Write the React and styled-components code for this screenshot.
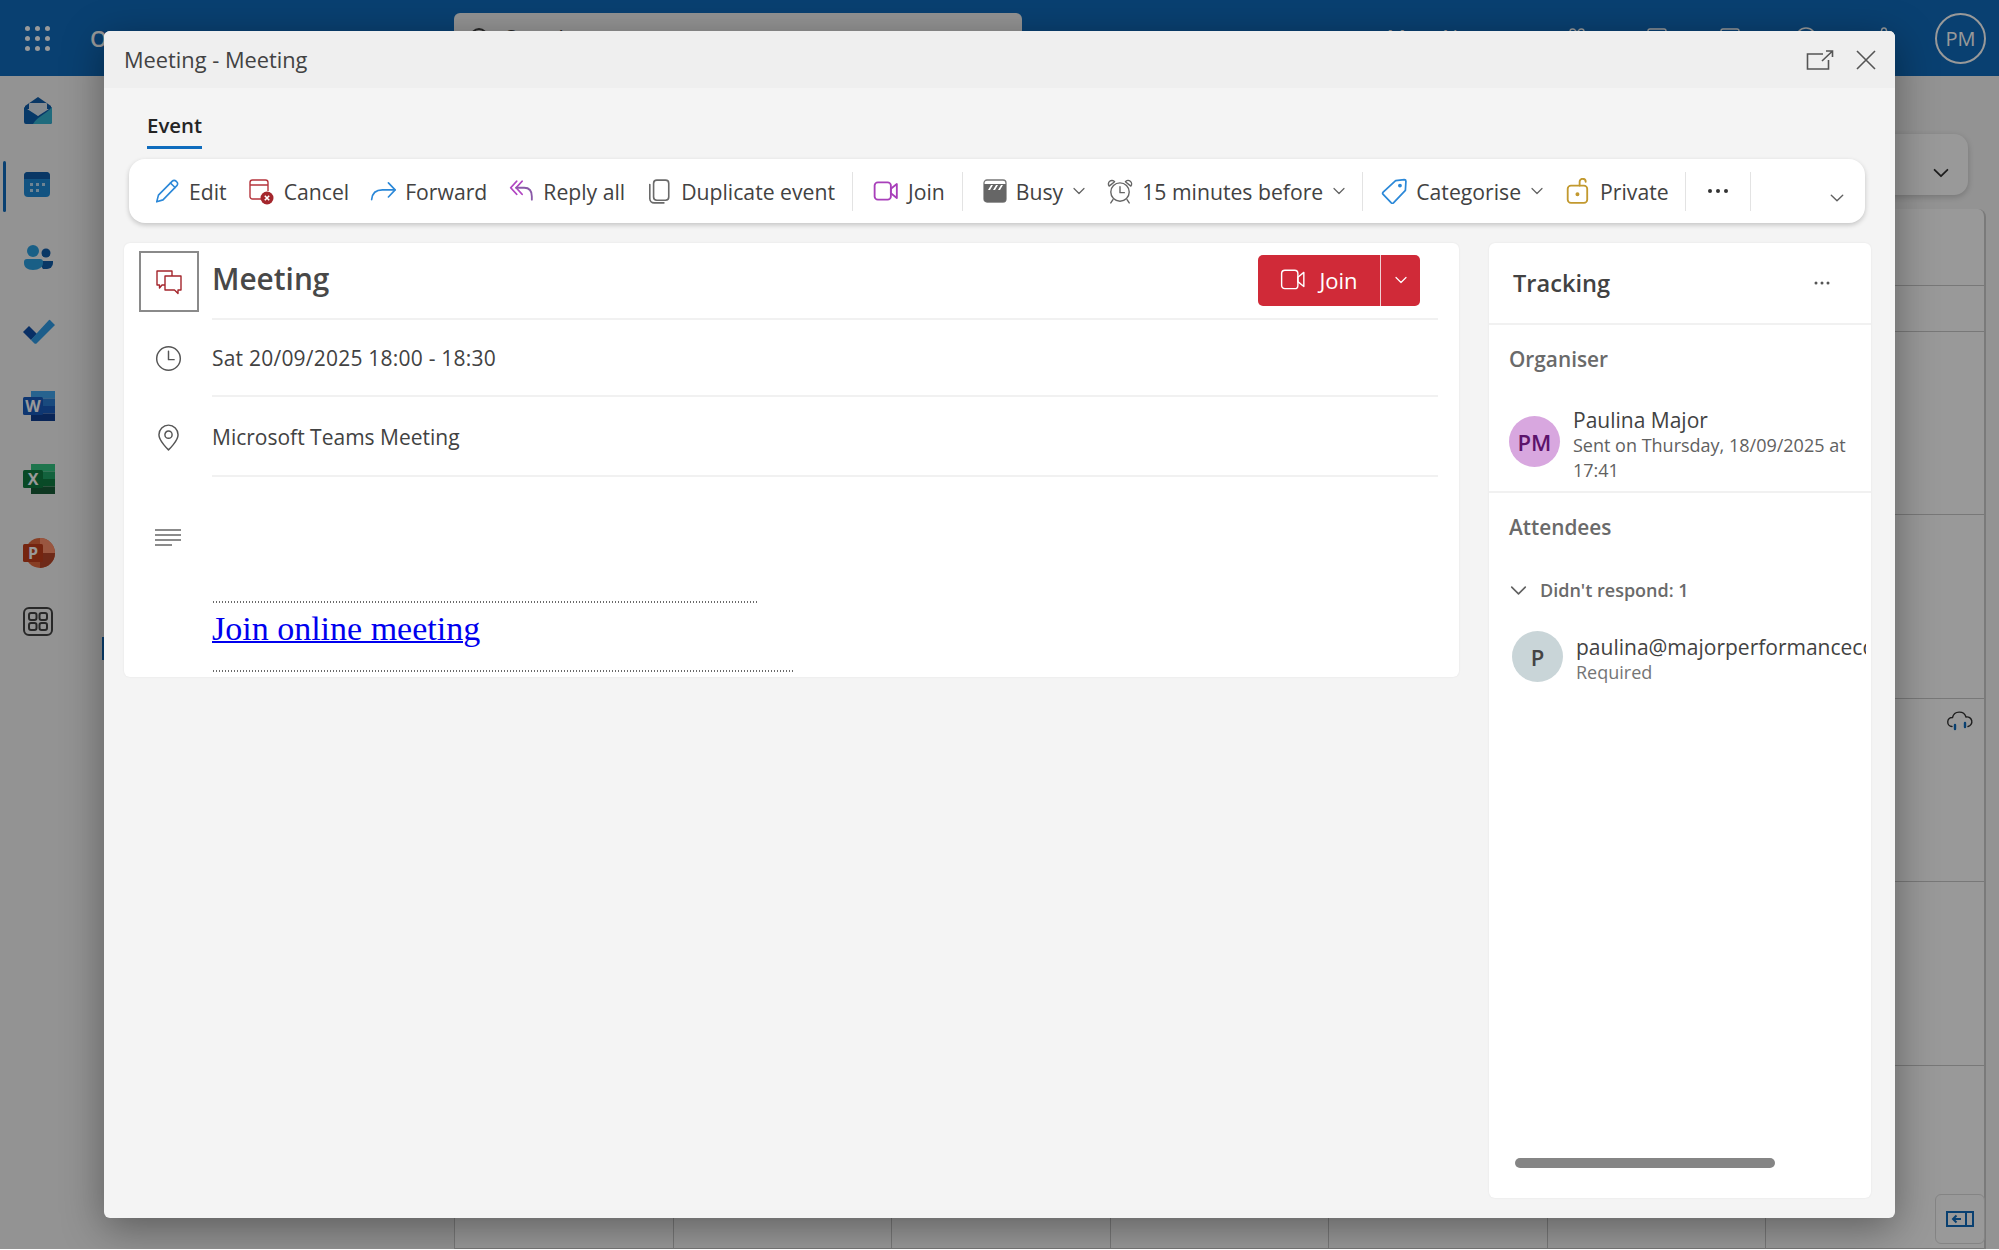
import React from 'react';
import styled, {createGlobalStyle} from 'styled-components';
import {Gift, Square, HelpCircle, Settings, Search, Video} from 'lucide-react';

const Global = createGlobalStyle`
    html, body {
        margin: 0;
        padding: 0;
        background: #fff;
        overflow: hidden;
    }
    * {
        box-sizing: border-box;
    }
    body {
        font-family: "Open Sans", "Noto Sans", sans-serif;
    }
`;

const Page = styled.div`
    position: relative;
    width: 1999px;
    height: 1249px;
    overflow: hidden;
    background: #f5f5f5;
`;

/* outlook behind the dialog */
const TopBar = styled.header`
    height: 76px;
    background: #0f6cbd;
    display: flex;
    align-items: center;
    color: #fff;
`;

const LeftSlot = styled.div`
    width: 454px;
    padding-left: 25px;
    display: flex;
    align-items: center;
    gap: 40px;
`;

const Waffle = styled.div`
    display: grid;
    grid-template-columns: repeat(3, 5px);
    gap: 5px;
`;

const Dot = styled.span`
    width: 5px;
    height: 5px;
    border-radius: 50%;
    background: #fff;
`;

const Brand = styled.span`
    font-size: 22px;
    font-weight: 600;
`;

const SearchBox = styled.div`
    width: 568px;
    height: 50px;
    border-radius: 6px;
    background: #f5f5f5;
    color: #444;
    display: flex;
    align-items: center;
    gap: 13px;
    padding-left: 14px;
    font-size: 21px;
`;

const HeaderTools = styled.div`
    flex: 1;
    display: flex;
    align-items: center;
    justify-content: flex-end;
    padding-right: 13px;
`;

const MeetNow = styled.div`
    display: flex;
    align-items: center;
    gap: 8px;
    font-size: 21px;
    margin-right: 78px;
`;

const HeaderIcon = styled.span`
    display: flex;
    margin-right: ${p => p.$gap}px;
`;

const Me = styled.div`
    width: 51px;
    height: 51px;
    border-radius: 50%;
    border: 2px solid #fff;
    display: flex;
    align-items: center;
    justify-content: center;
    font-size: 20px;
`;

const Under = styled.div`
    display: flex;
    height: 1173px;
`;

const Rail = styled.nav`
    width: 100px;
    margin-top: -2px;
    display: flex;
    flex-direction: column;
`;

const RailItem = styled.div`
    position: relative;
    height: 73.7px;
    padding-left: 23px;
    margin-top: ${p => p.$shift || 0}px;
    display: flex;
    align-items: center;
    ${p => p.$active && `
        &::before {
            content: "";
            position: absolute;
            left: 3px;
            top: 13px;
            width: 3px;
            height: 51px;
            border-radius: 2px;
            background: #0f6cbd;
        }
    `}
`;

const Folders = styled.div`
    position: relative;
    width: 354px;
    &::before {
        content: "";
        position: absolute;
        left: 2px;
        top: 561px;
        width: 2px;
        height: 23px;
        background: #0f6cbd;
    }
`;

const CalendarArea = styled.main`
    flex: 1;
    padding: 58px 13px 0 0;
    display: flex;
    flex-direction: column;
`;

const ViewBar = styled.div`
    height: 63px;
    margin-right: 18px;
    border-radius: 14px;
    background: #fff;
    box-shadow: 0 2px 6px rgba(0, 0, 0, 0.2);
    display: flex;
    align-items: flex-end;
    justify-content: flex-end;
    padding: 0 18px 13px 0;
`;

const CalendarGrid = styled.div`
    margin-top: 14px;
    flex: 1;
    border-radius: 8px 8px 0 0;
    background: #fff;
    border-right: 2px solid #ccc;
    display: grid;
    grid-template-columns: repeat(7, 1fr);
    grid-template-rows: 77px 46px repeat(5, 183.5px);
`;

const Cell = styled.div`
    border-left: 1px solid #c8c8c8;
    border-bottom: 1px solid #c8c8c8;
    display: flex;
    justify-content: flex-end;
`;

const CloudSlot = styled.div`
    margin: 12px 10px 0 0;
`;

const ParkButton = styled.div`
    position: absolute;
    right: 14px;
    bottom: 5px;
    width: 50px;
    height: 50px;
    border: 1px solid #ddd;
    border-radius: 6px;
    background: #fff;
    display: flex;
    align-items: center;
    justify-content: center;
`;

/* dialog */
const Scrim = styled.div`
    position: absolute;
    inset: 0;
    background: rgba(0, 0, 0, 0.4);
    display: flex;
    align-items: center;
    justify-content: center;
`;

const Dialog = styled.div`
    width: 1791px;
    height: 1187px;
    border-radius: 6px;
    background: #f4f4f4;
    box-shadow: 0 10px 42px rgba(0, 0, 0, 0.38);
    display: flex;
    flex-direction: column;
    overflow: hidden;
`;

const TitleBar = styled.div`
    height: 57px;
    flex: none;
    background: #efefef;
    display: flex;
    align-items: center;
    justify-content: space-between;
    padding: 0 19px 0 20px;
    color: #424242;
    font-size: 21.8px;
`;

const WindowButtons = styled.div`
    display: flex;
    align-items: center;
    gap: 22px;
    color: #555;
`;

const Tabs = styled.div`
    height: 71px;
    flex: none;
    padding: 22px 0 0 43px;
`;

const Tab = styled.div`
    display: inline-block;
    height: 39px;
    font-size: 20.4px;
    font-weight: 600;
    line-height: 30px;
    color: #242424;
    border-bottom: 3px solid #0f6cbd;
`;

const Toolbar = styled.div`
    height: 64px;
    flex: none;
    margin: 0 30px 0 25px;
    padding: 0 20px 0 25px;
    border-radius: 16px;
    background: #fff;
    box-shadow: 0 2px 5px rgba(0, 0, 0, 0.2);
    display: flex;
    align-items: center;
    gap: 21px;
    white-space: nowrap;
`;

const ToolItem = styled.div`
    display: flex;
    align-items: center;
    gap: 9px;
    font-size: 21.2px;
    color: #424242;
`;

const ToolSep = styled.span`
    width: 1px;
    height: 39px;
    margin: 0 ${p => p.$after ?? -1}px 0 ${p => p.$before ?? -4}px;
    background: #e3e3e3;
`;

const ToolDots = styled.div`
    display: flex;
    margin: 0 4px 0 1px;
`;

const ToolEnd = styled.div`
    margin-left: auto;
    padding-top: 13px;
    display: flex;
`;

const Columns = styled.div`
    flex: 1;
    margin: 20px 24px 20px 20px;
    display: flex;
    gap: 30px;
    min-height: 0;
`;

const EventCard = styled.section`
    flex: 1;
    height: 434px;
    border-radius: 6px;
    background: #fff;
    padding-right: 21px;
    box-shadow: 0 0 2px rgba(0, 0, 0, 0.08);
`;

const HeadRow = styled.div`
    display: flex;
    height: 77px;
    padding-left: 15px;
`;

const TypeBox = styled.div`
    width: 60px;
    height: 61px;
    margin: 8px 13px 0 0;
    border: 2px solid #8a8a8a;
    display: flex;
    align-items: center;
    justify-content: center;
`;

const HeadMain = styled.div`
    flex: 1;
    display: flex;
    align-items: center;
    justify-content: space-between;
    padding-right: 18px;
    border-bottom: 2px solid #f1f1f1;
`;

const EventTitle = styled.h1`
    margin: -5px 0 0;
    font-size: 29.8px;
    font-weight: 600;
    color: #484848;
`;

const JoinSplit = styled.div`
    width: 162px;
    height: 51px;
    border-radius: 5px;
    background: #d02a38;
    color: #fff;
    display: flex;
    margin-top: -1px;
    font-size: 22px;
    font-weight: 500;
`;

const JoinMain = styled.div`
    width: 123px;
    display: flex;
    align-items: center;
    justify-content: center;
    gap: 13px;
    border-right: 1px solid #f0d0d3;
`;

const JoinDrop = styled.div`
    flex: 1;
    display: flex;
    align-items: center;
    justify-content: center;
`;

const InfoRow = styled.div`
    display: flex;
    height: ${p => p.$h}px;
`;

const InfoIcon = styled.div`
    width: 88px;
    flex: none;
    display: flex;
    justify-content: center;
    align-items: ${p => p.$top ? 'flex-start' : 'center'};
    padding: ${p => p.$top ? '52px 0 0' : '0'};
    color: #555;
`;

const InfoText = styled.div`
    flex: 1;
    display: flex;
    align-items: center;
    padding-top: 1px;
    font-size: 21px;
    letter-spacing: ${p => p.$track || 0}px;
    color: #424242;
    border-bottom: 2px solid #f1f1f1;
`;

const InviteBody = styled.div`
    flex: 1;
    padding: 124px 0 0 1px;
`;

const DottedLine = styled.div`
    width: ${p => p.$w}px;
    height: 2px;
    background: repeating-linear-gradient(90deg, #6a6a6a 0 1.5px, transparent 1.5px 3px);
`;

const MeetingLink = styled.a`
    display: block;
    height: 67px;
    padding-top: 3px;
    margin-left: -1px;
    font-family: "Liberation Serif", serif;
    font-size: 34px;
    line-height: 46px;
    color: #0000ee;
    text-decoration: underline;
    text-decoration-thickness: 2px;
`;

const Tracking = styled.aside`
    position: relative;
    width: 382px;
    flex: none;
    border-radius: 6px;
    background: #fff;
    box-shadow: 0 0 2px rgba(0, 0, 0, 0.08);
`;

const TrackHead = styled.div`
    height: 82px;
    padding: 0 41px 0 24px;
    display: flex;
    align-items: center;
    justify-content: space-between;
    border-bottom: 2px solid #f1f1f1;
`;

const TrackTitle = styled.h2`
    margin: 0;
    font-size: 23.6px;
    font-weight: 600;
    color: #424242;
`;

const Section = styled.div`
    padding: 21px 0 0 20px;
    height: ${p => p.$h}px;
    border-bottom: ${p => p.$line ? '2px solid #f1f1f1' : 'none'};
`;

const SectionLabel = styled.div`
    height: 26px;
    line-height: 26px;
    font-size: 20.8px;
    font-weight: 600;
    color: #6a6a6a;
`;

const Person = styled.div`
    display: flex;
    align-items: flex-start;
    gap: ${p => p.$gap}px;
    margin: ${p => p.$m};
    overflow: hidden;
    white-space: nowrap;
`;

const Avatar = styled.div`
    width: 51px;
    height: 51px;
    flex: none;
    margin-top: ${p => p.$top}px;
    border-radius: 50%;
    background: ${p => p.$bg};
    color: ${p => p.$fg};
    display: flex;
    align-items: center;
    justify-content: center;
    font-size: 22px;
    font-weight: 600;
`;

const PersonText = styled.div`
    margin-top: ${p => p.$top}px;
`;

const PersonName = styled.div`
    font-size: 21px;
    line-height: 26px;
    color: #424242;
`;

const PersonNote = styled.div`
    font-size: 18px;
    line-height: 25px;
    color: ${p => p.$light ? '#757575' : '#616161'};
    white-space: ${p => p.$wrap ? 'normal' : 'nowrap'};
    width: 285px;
`;

const Group = styled.div`
    display: flex;
    align-items: center;
    gap: 12px;
    margin-top: 38px;
    font-size: 18px;
    font-weight: 600;
    color: #6a6a6a;
    line-height: 24px;
`;

const ScrollThumb = styled.div`
    position: absolute;
    left: 26px;
    bottom: 30px;
    width: 260px;
    height: 10px;
    border-radius: 5px;
    background: #858585;
`;

const Ico = ({size = 26, w, children, stroke = 'currentColor', sw = 1.5}) => (
    <svg width={w || size} height={size} viewBox={`0 0 ${w || 24} 24`} fill="none" stroke={stroke} strokeWidth={sw} strokeLinecap="round" strokeLinejoin="round" style={{flex: 'none'}}>
        {children}
    </svg>
);

const Chevron = ({size = 14, color = '#616161', sw = 1.2}) => (
    <svg width={size} height={size} viewBox="0 0 14 14" fill="none" stroke={color} strokeWidth={sw} strokeLinecap="round" strokeLinejoin="round" style={{flex: 'none'}}>
        <path d="M2 4.5l5 5 5-5" />
    </svg>
);

const MailLogo = () => (
    <svg width="30" height="28" viewBox="0 0 30 28">
        <path d="M15 0L28 9v3H2V9z" fill="#0f5ca8" />
        <rect x="6" y="6" width="18" height="12" rx="1" fill="#dfe8f1" />
        <path d="M1 10l14 9 14-9v15a2 2 0 0 1-2 2H3a2 2 0 0 1-2-2z" fill="#0d5fae" />
        <path d="M29 10v15a2 2 0 0 1-2 2H10c5-8 12-9 19-17z" fill="#35b2d1" />
    </svg>
);

const CalendarLogo = () => (
    <svg width="28" height="27" viewBox="0 0 28 27">
        <rect x="1" y="1" width="26" height="25" rx="4" fill="#1f8bd8" />
        <path d="M1 8V5a4 4 0 0 1 4-4h18a4 4 0 0 1 4 4v3z" fill="#0f5ca8" />
        <g fill="#b9dcf5">
            <rect x="7" y="12" width="3" height="3" />
            <rect x="13" y="12" width="3" height="3" />
            <rect x="19" y="12" width="3" height="3" />
            <rect x="7" y="18" width="3" height="3" />
            <rect x="13" y="18" width="3" height="3" />
        </g>
    </svg>
);

const PeopleLogo = () => (
    <svg width="30" height="26" viewBox="0 0 30 26">
        <circle cx="23" cy="8" r="4.5" fill="#0f5ca8" />
        <path d="M15 16h15v2a6 6 0 0 1-6 6h-4z" fill="#0f5ca8" />
        <circle cx="10" cy="6" r="6" fill="#2a9fe0" />
        <path d="M1 17a3 3 0 0 1 3-3h13a3 3 0 0 1 3 3v1c0 4-4 7-10 7S1 22 1 18z" fill="#2a9fe0" />
    </svg>
);

const TodoLogo = () => (
    <svg width="32" height="26" viewBox="0 0 32 26">
        <path d="M0 13l6-6 8 8-6 6z" fill="#0f4fa8" />
        <path d="M8 21l3 3a2 2 0 0 0 3 0L32 6l-5-5a1 1 0 0 0-1 0L14 14z" fill="#2f9be6" />
    </svg>
);

const OfficeLogo = ({a, b, c, d, tile, letter}) => (
    <svg width="32" height="30" viewBox="0 0 32 30">
        <rect x="8" y="0" width="24" height="7.5" fill={a} />
        <rect x="8" y="7.5" width="24" height="7.5" fill={b} />
        <rect x="8" y="15" width="24" height="7.5" fill={c} />
        <rect x="8" y="22.5" width="24" height="7.5" fill={d} />
        <rect x="0" y="6" width="20" height="18" rx="1.5" fill={tile} />
        <text x="10" y="21" textAnchor="middle" fontSize="16" fontWeight="700" fontFamily="Open Sans" fill="#fff">{letter}</text>
    </svg>
);

const PowerLogo = () => (
    <svg width="32" height="30" viewBox="0 0 32 30">
        <circle cx="17" cy="15" r="15" fill="#e2683c" />
        <path d="M17 15h15a15 15 0 0 1-15 15z" fill="#b7472a" />
        <path d="M17 0a15 15 0 0 1 15 15H17z" fill="#ff8f6b" />
        <rect x="0" y="6" width="20" height="18" rx="1.5" fill="#c43e1c" />
        <text x="10" y="21" textAnchor="middle" fontSize="16" fontWeight="700" fontFamily="Open Sans" fill="#fff">P</text>
    </svg>
);

const AppsLogo = () => (
    <svg width="30" height="29" viewBox="0 0 30 29" fill="none" stroke="#444" strokeWidth="2">
        <rect x="1" y="1" width="28" height="27" rx="5" />
        <rect x="6" y="6" width="7.5" height="7" rx="2" />
        <rect x="16.5" y="6" width="7.5" height="7" rx="2" />
        <rect x="6" y="16" width="7.5" height="7" rx="2" />
        <rect x="16.5" y="16" width="7.5" height="7" rx="2" />
    </svg>
);

const railLogos = [
    <MailLogo />,
    <CalendarLogo />,
    <PeopleLogo />,
    <TodoLogo />,
    <OfficeLogo a="#41a5ee" b="#2b7cd3" c="#185abd" d="#103f91" tile="#185abd" letter="W" />,
    <OfficeLogo a="#33c481" b="#21a366" c="#107c41" d="#185c37" tile="#107c41" letter="X" />,
    <PowerLogo />,
    <AppsLogo />,
];

const toolIcons = {
    edit: (
        <Ico stroke="#2b88d8">
            <path d="M2.5 22l1.6-6.2L16.9 2.900a2.400 2.400 0 0 1 3.400 0l.8.8a2.400 2.400 0 0 1 0 3.400L8.300 20.200z" />
            <path d="M15.200 4.600l4.200 4.200" />
        </Ico>
    ),
    cancel: (
        <svg width="27" height="27" viewBox="0 0 27 27" fill="none" style={{flex: 'none'}}>
            <path d="M13 21H4.5A2.5 2.5 0 0 1 2 18.5v-14A2.500 2.500 0 0 1 4.500 2h13A2.500 2.500 0 0 1 20 4.500V13M2 7h18" stroke="#b5343c" strokeWidth="1.4" />
            <circle cx="19" cy="20" r="6.500" fill="#a4262c" />
            <path d="M16.800 17.800l4.400 4.400M21.200 17.800l-4.400 4.400" stroke="#fff" strokeWidth="1.600" />
        </svg>
    ),
    forward: (
        <Ico stroke="#2b88d8">
            <path d="M1.500 20c.5-6 4.500-9 10-9H23" />
            <path d="M17 4.500l6.200 6.500-6.200 6.500" />
        </Ico>
    ),
    replyAll: (
        <Ico stroke="#b146c2" sw="1.700">
            <path d="M8 3L2.500 9 8 15M13 3L7.500 9 13 15" />
            <path d="M7.500 9H15c4.500 0 7 3 7 8v3" stroke="#8a5aa8" />
        </Ico>
    ),
    duplicate: (
        <Ico stroke="#6a6a6a">
            <rect x="7" y="2" width="14" height="18.500" rx="3" />
            <path d="M3.500 6v13A4 4 0 0 0 7.500 23h9" />
        </Ico>
    ),
    join: (
        <Ico stroke="#a83fba" sw="1.700">
            <rect x="1.500" y="4" width="15" height="16" rx="3" />
            <path d="M16.500 10L22 5.500v13L16.500 14z" />
        </Ico>
    ),
    busy: (
        <svg width="24" height="26" viewBox="0 0 24 26" style={{flex: 'none'}}>
            <rect x="1" y="2" width="22" height="22" rx="3" fill="#fff" stroke="#777" strokeWidth="1.300" />
            <path d="M1 13h22v8a3 3 0 0 1-3 3H4a3 3 0 0 1-3-3z" fill="#666" />
            <path d="M1 6h22v7H1z" fill="#666" />
            <path d="M5 12l3-5h2l-3 5zM10 12l3-5h2l-3 5zM15 12l3-5h2l-3 5z" fill="#fff" />
        </svg>
    ),
    alarm: (
        <Ico stroke="#666" sw="1.300">
            <circle cx="12" cy="13" r="8.500" />
            <path d="M12 8v5.500h4" />
            <path d="M2 7.500a3.200 3.200 0 0 1 5-4zM22 7.500a3.200 3.200 0 0 0-5-4zM5.500 20L3.500 23M18.500 20l2 3" />
        </Ico>
    ),
    tag: (
        <Ico stroke="#2b88d8" sw="1.600">
            <path d="M9.500 23L2 15.200a1.600 1.600 0 0 1 0-2.200L13.500 2.500 21.500 1.500A1.500 1.500 0 0 1 23 3l-.5 8.500L11.500 23a1.500 1.500 0 0 1-2 0z" />
            <circle cx="17.500" cy="7" r="1" fill="#2b88d8" />
        </Ico>
    ),
    lock: (
        <Ico stroke="#c2992f" sw="1.700">
            <rect x="2.500" y="7" width="18" height="16" rx="3" />
            <path d="M13.500 7V3.500a2.800 2.800 0 0 1 5.600 0" />
            <circle cx="11.500" cy="15" r="1" fill="#c2992f" />
        </Ico>
    ),
};

const Tool = ({icon, label, chevron}) => (
    <ToolItem>
        {toolIcons[icon]}
        <span>{label}</span>
        {chevron && <Chevron />}
    </ToolItem>
);

const App = () => {
    return <Page>
        <Global />

        <TopBar>
            <LeftSlot>
                <Waffle>
                    {Array.from({length: 9}).map((_, i) => <Dot key={i} />)}
                </Waffle>
                <Brand>Outlook</Brand>
            </LeftSlot>
            <SearchBox>
                <Search size={24} />
                <span>Search</span>
            </SearchBox>
            <HeaderTools>
                <MeetNow>
                    <Video size={24} strokeWidth={1.4} />
                    <span>Meet Now</span>
                </MeetNow>
                <HeaderIcon $gap={56}><Gift size={24} strokeWidth={1.4} /></HeaderIcon>
                <HeaderIcon $gap={49}><Square size={24} strokeWidth={1.4} /></HeaderIcon>
                <HeaderIcon $gap={52}><Square size={24} strokeWidth={1.4} /></HeaderIcon>
                <HeaderIcon $gap={54}><HelpCircle size={24} strokeWidth={1.4} /></HeaderIcon>
                <HeaderIcon $gap={39}><Settings size={24} strokeWidth={1.4} /></HeaderIcon>
                <Me>PM</Me>
            </HeaderTools>
        </TopBar>

        <Under>
            <Rail>
                {railLogos.map((logo, i) => (
                    <RailItem key={i} $active={i === 1} $shift={i === 7 ? -5 : 0}>{logo}</RailItem>
                ))}
            </Rail>
            <Folders />
            <CalendarArea>
                <ViewBar><Chevron size={18} color="#333" sw={1.4} /></ViewBar>
                <CalendarGrid>
                    {Array.from({length: 49}).map((_, i) => (
                        <Cell key={i}>
                            {i === 34 && (
                                <CloudSlot>
                                    <svg width="28" height="22" viewBox="0 0 28 22" fill="none" stroke="#333" strokeWidth="1.400" strokeLinecap="round">
                                        <path d="M6 15.500a4.500 4.500 0 0 1 .5-9A7 7 0 0 1 20 6a4.800 4.800 0 0 1 2 9.500" />
                                        <path d="M9 14v4M19 12v4" stroke="#0f6cbd" strokeWidth="2.400" />
                                    </svg>
                                </CloudSlot>
                            )}
                        </Cell>
                    ))}
                </CalendarGrid>
            </CalendarArea>
        </Under>

        <ParkButton>
            <svg width="28" height="16" viewBox="0 0 28 16" fill="none" stroke="#0f6cbd" strokeWidth="2">
                <rect x="1" y="1" width="26" height="14" />
                <path d="M20 1v14M15 8H7M10.500 4.500L7 8l3.500 3.500" />
            </svg>
        </ParkButton>

        <Scrim>
            <Dialog>
                <TitleBar>
                    <span>Meeting - Meeting</span>
                    <WindowButtons>
                        <svg width="28" height="20" viewBox="0 0 28 20" fill="none" stroke="#555" strokeWidth="1.600">
                            <path d="M17 4H1.500v15h21V10" />
                            <path d="M16 11L26 1.500M20 1h6.500v6" />
                        </svg>
                        <svg width="20" height="20" viewBox="0 0 20 20" fill="none" stroke="#555" strokeWidth="1.600">
                            <path d="M1 1l18 18M19 1L1 19" />
                        </svg>
                    </WindowButtons>
                </TitleBar>

                <Tabs><Tab>Event</Tab></Tabs>

                <Toolbar>
                    <Tool icon="edit" label="Edit" />
                    <Tool icon="cancel" label="Cancel" />
                    <Tool icon="forward" label="Forward" />
                    <Tool icon="replyAll" label="Reply all" />
                    <Tool icon="duplicate" label="Duplicate event" />
                    <ToolSep />
                    <Tool icon="join" label="Join" />
                    <ToolSep />
                    <Tool icon="busy" label="Busy" chevron />
                    <Tool icon="alarm" label="15 minutes before" chevron />
                    <ToolSep $before={-5} $after={-3} />
                    <Tool icon="tag" label="Categorise" chevron />
                    <Tool icon="lock" label="Private" />
                    <ToolSep $before={-5} />
                    <ToolDots>
                        <svg width="22" height="6" viewBox="0 0 22 6" fill="#333">
                            <circle cx="3" cy="3" r="2" />
                            <circle cx="11" cy="3" r="2" />
                            <circle cx="19" cy="3" r="2" />
                        </svg>
                    </ToolDots>
                    <ToolSep />
                    <ToolEnd><Chevron size={16} /></ToolEnd>
                </Toolbar>

                <Columns>
                    <EventCard>
                        <HeadRow>
                            <TypeBox>
                                <svg width="26" height="26" viewBox="0 0 26 26" fill="none" stroke="#a4262c" strokeWidth="1.400" strokeLinejoin="round">
                                    <path d="M9 16H6l-2.500 3v-3H1V2h15v5" />
                                    <path d="M9 7h16v14h-3v3.500L18.500 21H9z" />
                                </svg>
                            </TypeBox>
                            <HeadMain>
                                <EventTitle>Meeting</EventTitle>
                                <JoinSplit>
                                    <JoinMain>
                                        <Ico stroke="#fff" sw="1.300">
                                            <rect x="1.500" y="3" width="15" height="17" rx="3" />
                                            <path d="M16.500 9.500L22 5v13l-5.500-4.500z" />
                                        </Ico>
                                        <span>Join</span>
                                    </JoinMain>
                                    <JoinDrop><Chevron size={14} color="#fff" /></JoinDrop>
                                </JoinSplit>
                            </HeadMain>
                        </HeadRow>

                        <InfoRow $h={77}>
                            <InfoIcon>
                                <Ico size={27} sw="1.300">
                                    <circle cx="12" cy="12" r="10.500" />
                                    <path d="M12 5.500V13h5" />
                                </Ico>
                            </InfoIcon>
                            <InfoText $track={0.22}>Sat 20/09/2025 18:00 - 18:30</InfoText>
                        </InfoRow>

                        <InfoRow $h={80}>
                            <InfoIcon>
                                <Ico size={27} sw="1.300">
                                    <path d="M12 23s-8.500-8-8.500-13.500a8.500 8.500 0 0 1 17 0C20.500 15 12 23 12 23z" />
                                    <circle cx="12" cy="9.500" r="3.200" />
                                </Ico>
                            </InfoIcon>
                            <InfoText>Microsoft Teams Meeting</InfoText>
                        </InfoRow>

                        <InfoRow $h={200}>
                            <InfoIcon $top>
                                <svg width="26" height="17" viewBox="0 0 26 17" stroke="#666" strokeWidth="1.600">
                                    <path d="M0 1h26M0 6h26M0 11h26M0 16h17" />
                                </svg>
                            </InfoIcon>
                            <InviteBody>
                                <DottedLine $w={546} />
                                <MeetingLink>Join online meeting</MeetingLink>
                                <DottedLine $w={582} />
                            </InviteBody>
                        </InfoRow>
                    </EventCard>

                    <Tracking>
                        <TrackHead>
                            <TrackTitle>Tracking</TrackTitle>
                            <svg width="16" height="4" viewBox="0 0 16 4" fill="#555">
                                <circle cx="2" cy="2" r="1.500" />
                                <circle cx="8" cy="2" r="1.500" />
                                <circle cx="14" cy="2" r="1.500" />
                            </svg>
                        </TrackHead>

                        <Section $h={168} $line>
                            <SectionLabel>Organiser</SectionLabel>
                            <Person $gap={13} $m="35px 0 0">
                                <Avatar $top={9} $bg="#d8a7df" $fg="#5c126b">PM</Avatar>
                                <PersonText $top={0}>
                                    <PersonName>Paulina Major</PersonName>
                                    <PersonNote $wrap>Sent on Thursday, 18/09/2025 at 17:41</PersonNote>
                                </PersonText>
                            </Person>
                        </Section>

                        <Section $h={220}>
                            <SectionLabel>Attendees</SectionLabel>
                            <Group>
                                <Chevron size={19} />
                                <span>Didn't respond: 1</span>
                            </Group>
                            <Person $gap={13} $m="29px 5px 0 3px">
                                <Avatar $top={0} $bg="#c9d5d8" $fg="#444">P</Avatar>
                                <PersonText $top={3}>
                                    <PersonName>paulina@majorperformanceconsulting.com</PersonName>
                                    <PersonNote $light>Required</PersonNote>
                                </PersonText>
                            </Person>
                        </Section>

                        <ScrollThumb />
                    </Tracking>
                </Columns>
            </Dialog>
        </Scrim>
    </Page>
}

export default App;
